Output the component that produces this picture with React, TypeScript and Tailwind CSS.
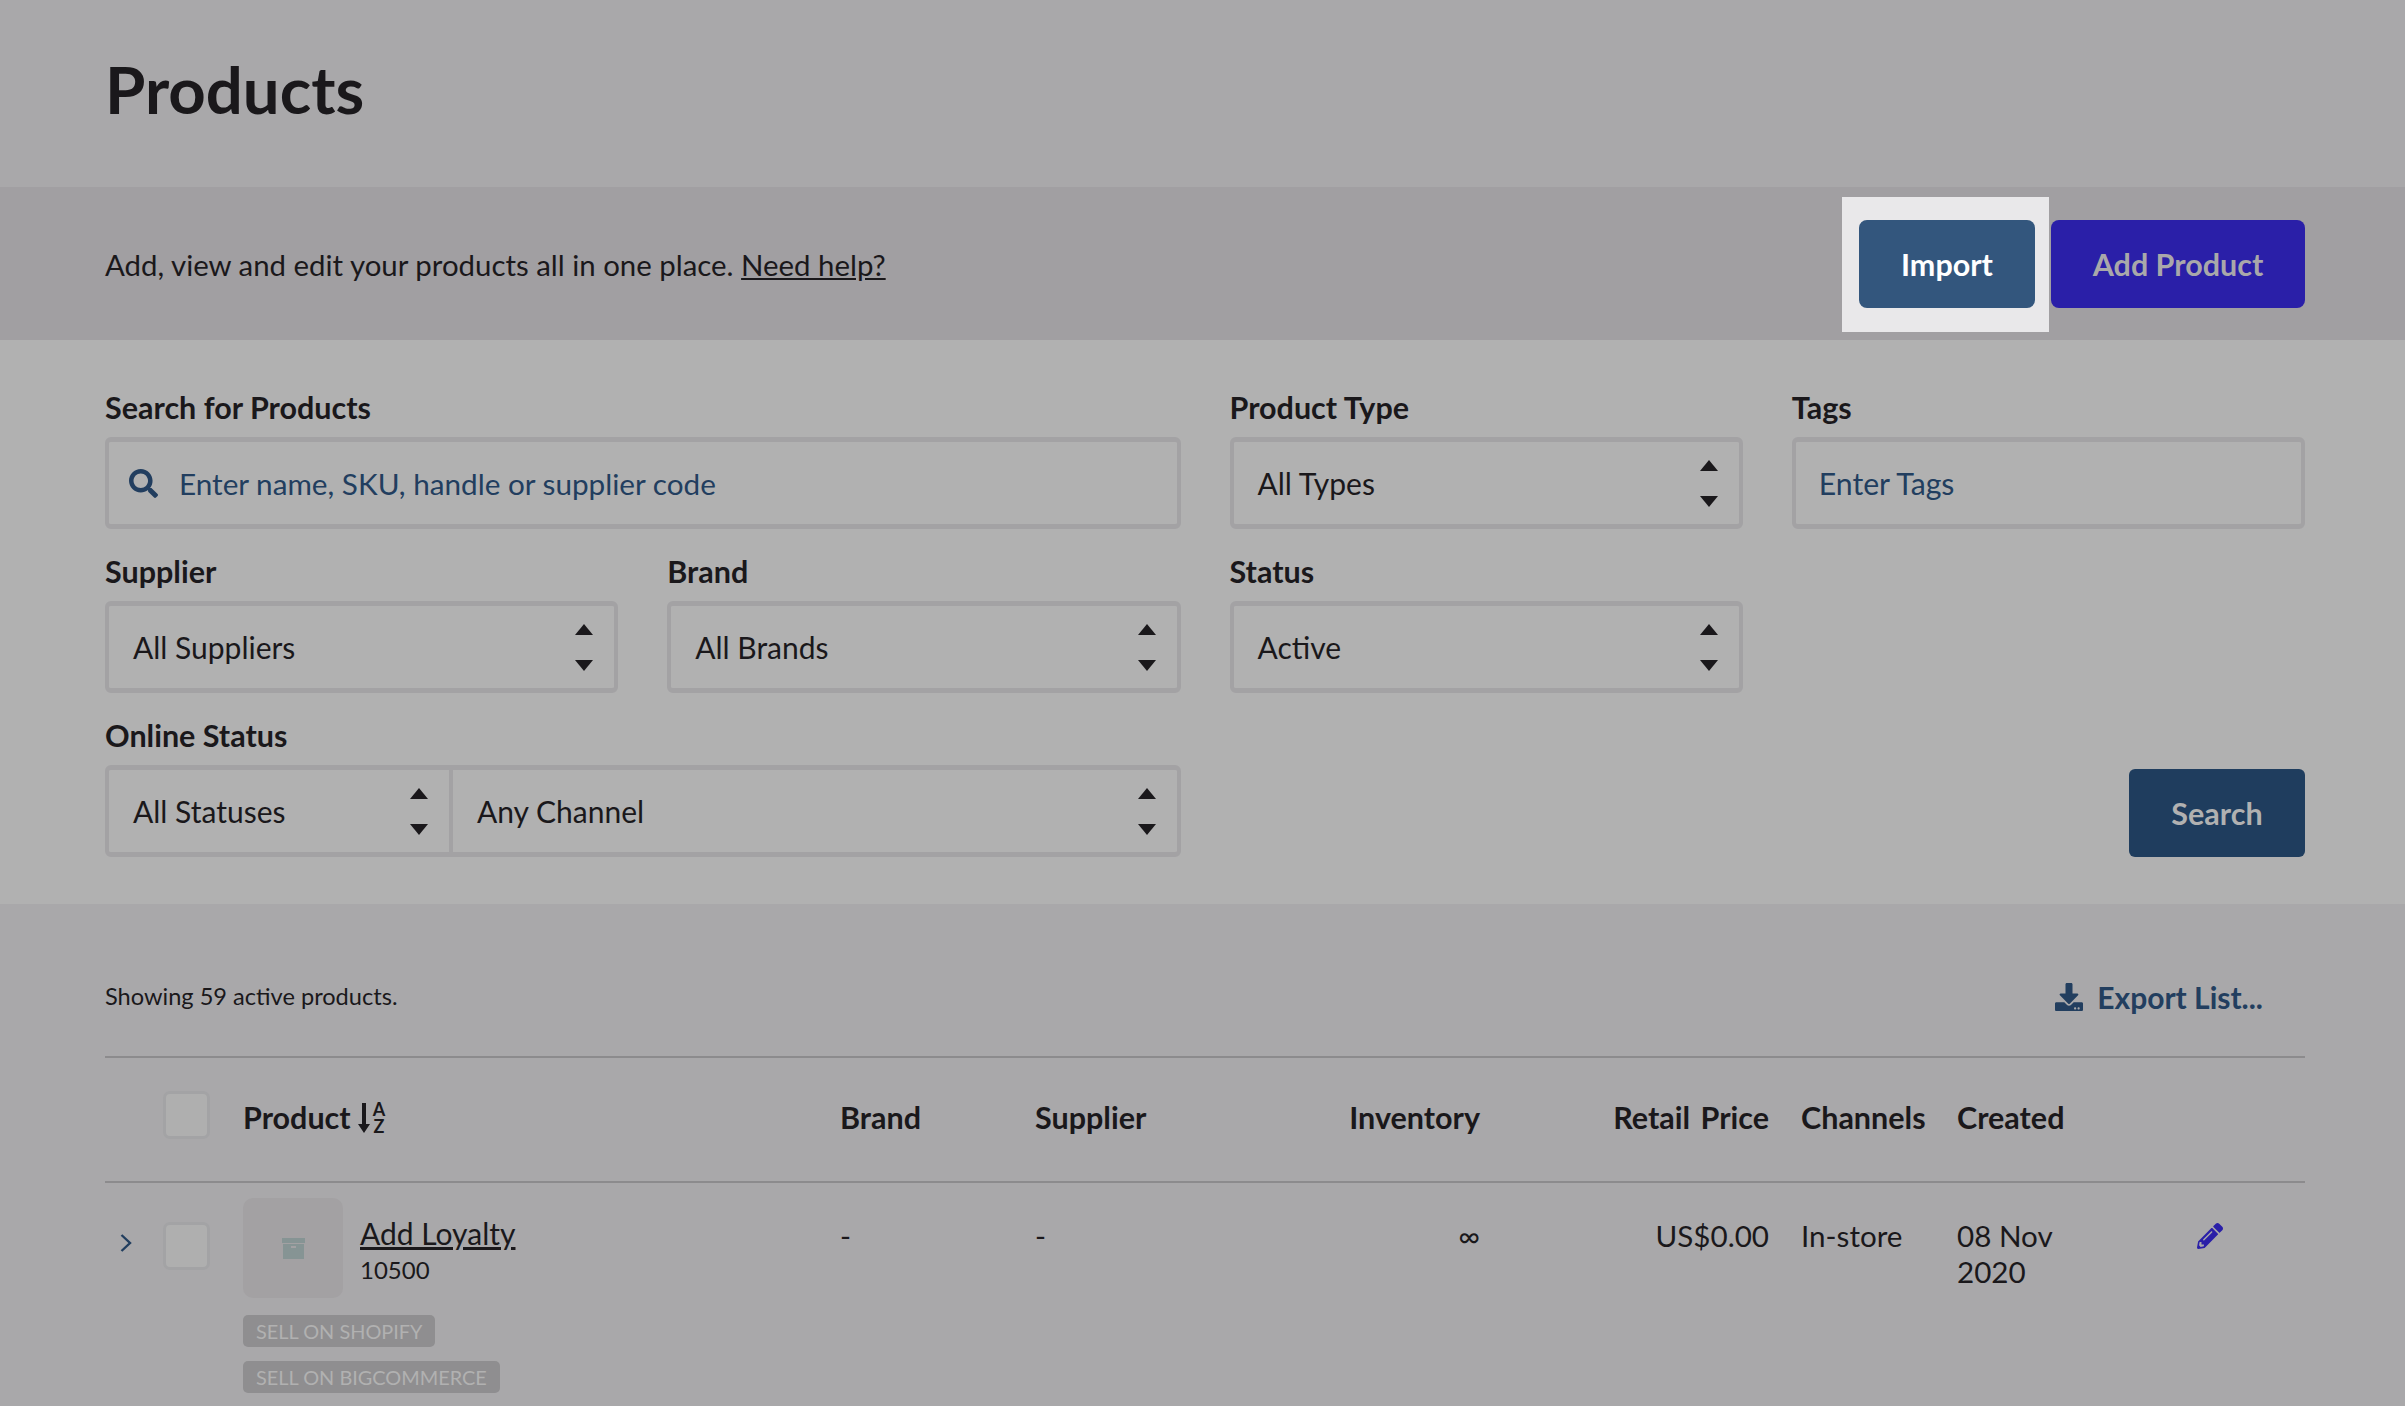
import React from "react";
import { FaSearch, FaPencilAlt, FaDownload } from "react-icons/fa";

function Arrows() {
  return (
    <span className="flex flex-col gap-[25px] text-[#1a181b]">
      <svg width="18" height="11" viewBox="0 0 18 11"><path d="M9 0L18 11H0Z" fill="currentColor" /></svg>
      <svg width="18" height="11" viewBox="0 0 18 11"><path d="M0 0H18L9 11Z" fill="currentColor" /></svg>
    </span>
  );
}

function Field({ label, children, className = "" }: { label: string; children: React.ReactNode; className?: string }) {
  return (
    <div className={className}>
      <div className="h-[32px] mb-[14px] text-[30.5px] leading-[32px] font-bold text-[#1a181b]">{label}</div>
      {children}
    </div>
  );
}

function Select({ value, className = "" }: { value: string; className?: string }) {
  return (
    <div className={`h-[92px] flex items-center justify-between text-[30px] text-[#1a181b] ${className}`}>
      <span className="mt-[1px]">{value}</span>
      <Arrows />
    </div>
  );
}

const boxed = "border-x-[4px] border-y-[5px] border-[#a3a2a4] rounded-[6px]";
const selectPad = "pl-[24px] pr-[21px]";

function Checkbox() {
  return <div className="w-[47px] h-[48px] rounded-[7px] border-[3px] border-[#a3a3a5] bg-[#afafaf]" />;
}

const cols = "grid grid-cols-[58px_80px_597px_195px_195px_250px_289px_188px_240px_108px]";

export default function App() {
  return (
    <div className="w-[2405px] h-[1406px] overflow-hidden bg-[#a9a8aa] text-[#1a181b] font-['Lato',sans-serif]">
      <div className="h-[187px] px-[105px] flex items-center">
        <h1 className="text-[65.3px] leading-none font-bold mt-[-8px]">Products</h1>
      </div>

      <div className="h-[153px] bg-[#a19fa2] pl-[105px] pr-[100px] pt-[2px] flex items-center justify-between">
        <p className="text-[29.4px] pt-[2px]">
          Add, view and edit your products all in one place. <span className="underline">Need help?</span>
        </p>
        <div className="flex items-center gap-[2px]">
          <div className="bg-[#e9e8ea] pl-[17px] pr-[14px] pt-[23px] pb-[24px]">
            <div className="w-[176px] h-[88px] pt-[2px] rounded-[8px] bg-[#33567d] text-white text-[30.5px] font-bold flex items-center justify-center">
              Import
            </div>
          </div>
          <div className="w-[254px] h-[88px] mb-[1px] pt-[2px] rounded-[8px] bg-[#2a1fa8] text-[#a9a8aa] text-[30.5px] font-bold flex items-center justify-center">
            Add Product
          </div>
        </div>
      </div>

      <div className="h-[564px] bg-[#b1b1b1] pl-[105px] pr-[100px] pt-[51px]">
        <div className="grid grid-cols-4 gap-x-[49px] gap-y-[26px]">
          <Field label="Search for Products" className="col-span-2">
            <div className={`h-[92px] flex items-center gap-[21px] pl-[20px] text-[29.7px] text-[#223e5f] ${boxed}`}>
              <FaSearch className="w-[29px] h-[29px]" />
              <span className="mt-[2px]">Enter name, SKU, handle or supplier code</span>
            </div>
          </Field>
          <Field label="Product Type">
            <Select value="All Types" className={`${selectPad} ${boxed}`} />
          </Field>
          <Field label="Tags">
            <div className={`h-[92px] flex items-center pl-[23px] text-[30.2px] text-[#223e5f] ${boxed}`}>
              <span className="mt-[2px]">Enter Tags</span>
            </div>
          </Field>
          <Field label="Supplier">
            <Select value="All Suppliers" className={`${selectPad} ${boxed}`} />
          </Field>
          <Field label="Brand">
            <Select value="All Brands" className={`${selectPad} ${boxed}`} />
          </Field>
          <Field label="Status">
            <Select value="Active" className={`${selectPad} ${boxed}`} />
          </Field>
          <div />
          <Field label="Online Status" className="col-span-2">
            <div className={`h-[92px] flex items-stretch ${boxed}`}>
              <Select value="All Statuses" className="w-[344px] h-auto pl-[24px] pr-[21px] border-r-[4px] border-[#a3a2a4]" />
              <Select value="Any Channel" className="flex-1 h-auto pl-[24px] pr-[21px]" />
            </div>
          </Field>
          <div />
          <div className="flex items-end justify-end">
            <div className="w-[176px] h-[88px] pt-[2px] rounded-[6px] bg-[#1f3d5e] text-[#b1b1b1] text-[30.5px] font-bold flex items-center justify-center">
              Search
            </div>
          </div>
        </div>
      </div>

      <div className="pr-[100px] pl-[105px]">
        <div className="h-[154px] flex items-center justify-between border-b-[2px] border-[#8c8b8d] pt-[34px]">
          <span className="text-[23.6px]">Showing 59 active products.</span>
          <span className="flex items-center gap-[14px] pr-[42px] text-[30px] font-bold text-[#223e5f]">
            <FaDownload className="w-[28px] h-[28px]" />
            Export List...
          </span>
        </div>

        <div className={`${cols} h-[125px] pb-[3px] items-center border-b-[2px] border-[#8c8b8d] text-[30.5px] font-bold`}>
          <div />
          <div className="mt-[-6px]"><Checkbox /></div>
          <div className="flex items-center gap-[7px]">
            Product
            <svg width="28" height="32" viewBox="0 0 28 32" fill="#1a181b" className="text-[18px] font-bold overflow-visible">
              <path d="M4 1H8V22H12L6 31L0 22H4Z" />
              <text x="21" y="14" textAnchor="middle">A</text>
              <text x="21" y="31" textAnchor="middle">Z</text>
            </svg>
          </div>
          <div>Brand</div>
          <div>Supplier</div>
          <div className="text-right">Inventory</div>
          <div className="text-right [word-spacing:3px]">Retail Price</div>
          <div className="pl-[32px]">Channels</div>
          <div>Created</div>
          <div />
        </div>

        <div className={`${cols} items-start text-[29.6px] leading-[36px] pt-[15px]`}>
          <div className="pl-[15px] pt-[36px]">
            <svg width="12" height="18" viewBox="0 0 12 18" fill="none" stroke="#223e5f" strokeWidth="2.4"><path d="M1.5 1L10 9L1.5 17" /></svg>
          </div>
          <div className="pt-[24px]"><Checkbox /></div>
          <div>
            <div className="flex items-center gap-[17px]">
              <div className="w-[100px] h-[100px] rounded-[10px] bg-[#a3a1a3] flex items-center justify-center">
                <svg width="23" height="21" viewBox="0 0 23 21" fill="#869494">
                  <rect x="0" y="0" width="23" height="5" />
                  <path d="M1 6H22V21H1ZM9 8V10H14V8Z" fillRule="evenodd" />
                </svg>
              </div>
              <div className="pt-[4px]">
                <div className="underline text-[30px]">Add Loyalty</div>
                <div className="text-[24px] leading-[32px] mt-[3px]">10500</div>
              </div>
            </div>
            <div className="mt-[17px] flex flex-col items-start gap-[14px]">
              <span className="h-[32px] px-[13px] rounded-[5px] bg-[#8f8e90] text-[#b1b1b1] text-[19.9px] leading-[32px]">SELL ON SHOPIFY</span>
              <span className="h-[32px] px-[13px] rounded-[5px] bg-[#8f8e90] text-[#b1b1b1] text-[19.9px] leading-[32px]">SELL ON BIGCOMMERCE</span>
            </div>
          </div>
          <div className="pt-[20px]">-</div>
          <div className="pt-[20px]">-</div>
          <div className="pt-[20px] text-right">∞</div>
          <div className="pt-[20px] text-right">US$0.00</div>
          <div className="pt-[20px] pl-[32px]">In-store</div>
          <div className="pt-[20px]">08 Nov<br />2020</div>
          <div className="pt-[25px]"><FaPencilAlt className="w-[26px] h-[26px] text-[#2a1fa8]" /></div>
        </div>
      </div>
    </div>
  );
}
